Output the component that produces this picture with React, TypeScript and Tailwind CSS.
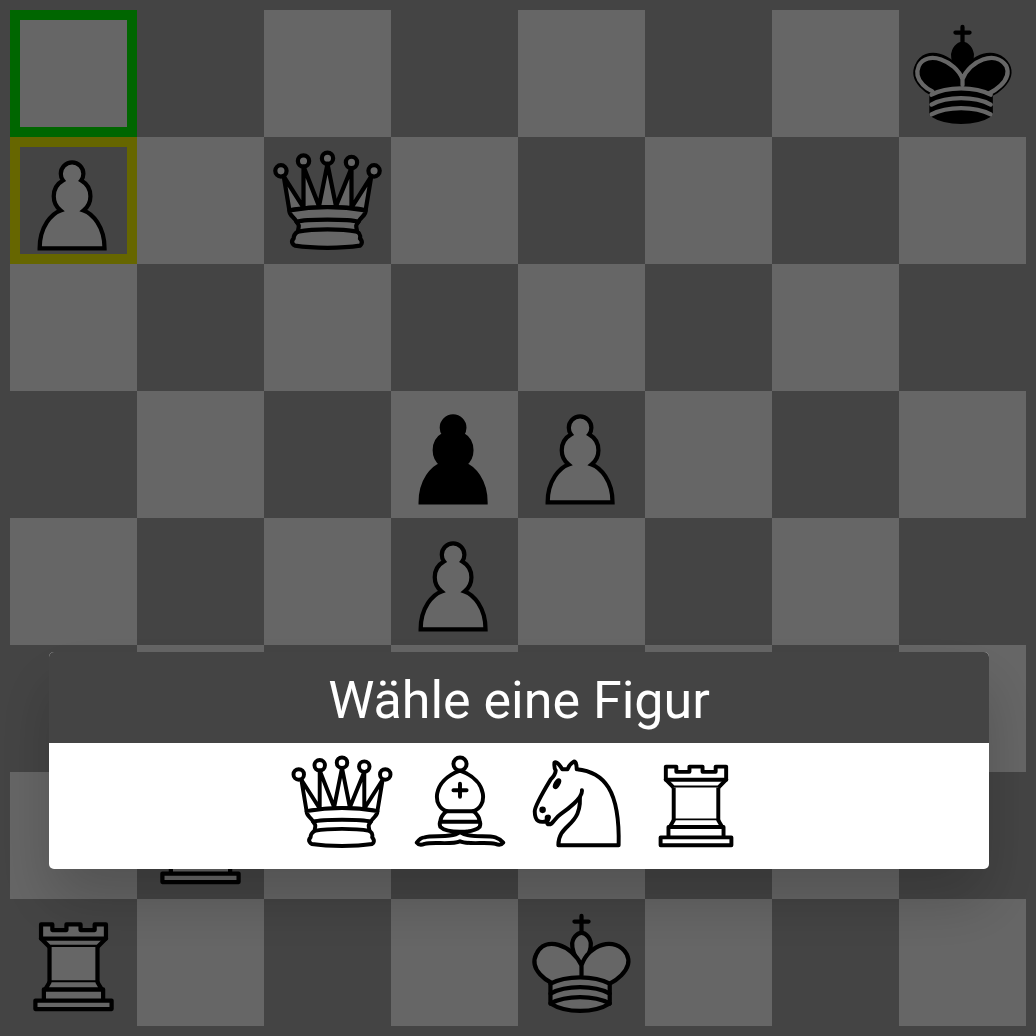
import { useState } from "react";
import type { ReactNode } from "react";

type Kind = "king" | "queen" | "rook" | "bishop" | "knight" | "pawn";
type Side = "white" | "black";
type Placed = { kind: Kind; side: Side };

function WhiteKing() {
  return (
    <>
      <path d="M22.5 11.63V6M20 8h5" />
      <path d="M22.5 25s4.5-7.5 3-10.500c0 0-1-2.500-3-2.500s-3 2.500-3 2.500c-1.500 3 3 10.500 3 10.500" strokeLinecap="butt" />
      <path d="M11.5 37c5.500 3.500 15.500 3.500 21 0v-7s9-4.500 6-10.500c-4-6.500-13.500-3.500-16 4V27v-3.500c-3.500-7.500-13-10.500-16-4-3 6 5 10 5 10V37z" />
      <path d="M11.5 30c5.500-3 15.500-3 21 0M11.5 33.500c5.500-3 15.500-3 21 0M11.5 37c5.500-3 15.500-3 21 0" fill="none" />
    </>
  );
}

function BlackKing() {
  return (
    <>
      <path d="M22.5 11.63V6M20 8h5" />
      <path d="M22.5 25s4.5-7.5 3-10.500c0 0-1-2.500-3-2.500s-3 2.500-3 2.500c-1.500 3 3 10.500 3 10.500" fill="black" />
      <path d="M11.5 37c5.500 3.500 15.500 3.500 21 0v-7s9-4.500 6-10.500c-4-6.500-13.500-3.500-16 4V27v-3.500c-3.500-7.500-13-10.500-16-4-3 6 5 10 5 10V37z" fill="black" />
      <g stroke="white" fill="none">
        <path d="M32 29.500s8.500-4 6.030-9.650C34.150 14 25 18 22.500 24.500l.01 2.100-.01-2.100C20 18 9.906 14 6.997 19.850c-2.497 5.650 4.853 9 4.853 9" />
        <path d="M11.5 30c5.500-3 15.500-3 21 0M11.5 33.500c5.500-3 15.500-3 21 0M11.5 37c5.500-3 15.500-3 21 0" />
      </g>
    </>
  );
}

function Queen() {
  return (
    <>
      <circle cx="6" cy="12" r="2" />
      <circle cx="14" cy="8.5" r="2" />
      <circle cx="22.5" cy="7.5" r="2" />
      <circle cx="31" cy="9" r="2" />
      <circle cx="39" cy="12" r="2" />
      <path d="M9 26c8.500-1.500 21-1.500 27 0l2-12-7 11V11l-5.500 13.500-3-15-3 15-5.500-14V25L7 14l2 12z" strokeLinecap="butt" />
      <path d="M9 26c0 2 1.500 2 2.500 4 1 1.500 1 1 .5 3.500-1.500 1-1.500 2.500-1.500 2.500-1.500 1.500.5 2.500.5 2.500 6.500 1 16.500 1 23 0 0 0 1.500-1 0-2.500 0 0 .5-1.500-1-2.500-.5-2.500-.5-2 .5-3.500 1-2 2.500-2 2.500-4-8.500-1.500-18.500-1.500-27 0z" strokeLinecap="butt" />
      <path d="M11.5 30c3.500-1 18.500-1 22 0M12 33.500c6-1 15-1 21 0" fill="none" />
    </>
  );
}

function Rook() {
  return (
    <>
      <path d="M9 39h27v-3H9v3zM12 36v-4h21v4H12zM11 14V9h4v2h5V9h5v2h5V9h4v5" strokeLinecap="butt" />
      <path d="M34 14l-3 3H14l-3-3" />
      <path d="M31 17v12.500H14V17" strokeLinecap="butt" strokeLinejoin="miter" />
      <path d="M31 29.500l1.500 2.500h-20l1.500-2.500" />
      <path d="M11 14h23" fill="none" strokeLinejoin="miter" />
    </>
  );
}

function Bishop() {
  return (
    <>
      <path d="M9 36c3.390-.970 10.110.430 13.500-2 3.390 2.430 10.110 1.030 13.500 2 0 0 1.650.540 3 2-.680.970-1.650.990-3 .5-3.390-.970-10.110.460-13.500-1-3.390 1.460-10.110.030-13.500 1-1.354.490-2.323.470-3-.5 1.354-1.940 3-2 3-2z" strokeLinecap="butt" />
      <path d="M15 32c2.500 2.500 12.500 2.500 15 0 .5-1.500 0-2 0-2 0-2.500-2.500-4-2.500-4 5.500-1.500 6-11.500-5-15.500-11 4-10.500 14-5 15.500 0 0-2.500 1.500-2.500 4 0 0-.5.500 0 2z" />
      <circle cx="22.5" cy="8" r="2.5" />
      <path d="M17.500 26h10M15 30h15M22.500 15.500v5M20 18h5" fill="none" />
    </>
  );
}

function Knight() {
  return (
    <>
      <path d="M22 10c10.500 1 16.500 8 16 29H15c0-9 10-6.500 8-21" />
      <path d="M24 18c.380 2.910-5.550 7.370-8 9-3 2-2.820 4.340-5 4-1.042-.940 1.410-3.040 0-3-1 0 .190 1.230-1 2-1 0-4.003 1-4-4 0-2 6-12 6-12s1.890-1.900 2-3.500c-.730-.994-.500-2-.500-3 1-1 3 2.500 3 2.500h2s.780-1.992 2.500-3c1 0 1 3 1 3" />
      <circle cx="9" cy="25.5" r="0.5" fill="black" />
      <ellipse cx="14.5" cy="15.5" rx="0.5" ry="1.5" transform="rotate(30 14.5 15.5)" fill="black" />
    </>
  );
}

function Pawn() {
  return (
    <path
      d="M22 9c-2.210 0-4 1.790-4 4 0 .890.290 1.710.780 2.380C16.830 16.500 15.500 18.590 15.500 21c0 2.030.940 3.840 2.410 5.030-3 1.060-7.410 5.550-7.410 13.470h23c0-7.920-4.410-12.410-7.410-13.470 1.470-1.190 2.410-3 2.410-5.030 0-2.410-1.330-4.500-3.280-5.620.490-.670.780-1.490.780-2.380 0-2.210-1.790-4-4-4z"
      strokeLinejoin="miter"
    />
  );
}

const shapes: Record<Kind, ReactNode> = {
  king: <WhiteKing />,
  queen: <Queen />,
  rook: <Rook />,
  bishop: <Bishop />,
  knight: <Knight />,
  pawn: <Pawn />,
};

function Piece({ kind, side }: Placed) {
  return (
    <svg
      viewBox="0 0 45 45"
      className="block size-full"
      fill={side === "white" ? "white" : "black"}
      stroke="black"
      strokeWidth="1.5"
      strokeLinecap="round"
      strokeLinejoin="round"
      aria-hidden="true"
    >
      {side === "black" && kind === "king" ? <BlackKing /> : shapes[kind]}
    </svg>
  );
}

const position: Record<string, Placed> = {
  h8: { kind: "king", side: "black" },
  a7: { kind: "pawn", side: "white" },
  c7: { kind: "queen", side: "white" },
  d5: { kind: "pawn", side: "black" },
  e5: { kind: "pawn", side: "white" },
  d4: { kind: "pawn", side: "white" },
  b2: { kind: "rook", side: "white" },
  a1: { kind: "rook", side: "white" },
  e1: { kind: "king", side: "white" },
};

const highlights: Record<string, string> = {
  a8: "border-10 border-[#00ff00]",
  a7: "border-10 border-[#ffff00]",
};

const squares = Array.from({ length: 64 }, (_, i) => {
  const col = i % 8;
  const row = Math.floor(i / 8);
  return { name: "abcdefgh"[col] + (8 - row), light: (col + row) % 2 === 0 };
});

const choices: { kind: Kind; label: string }[] = [
  { kind: "queen", label: "Dame" },
  { kind: "bishop", label: "Läufer" },
  { kind: "knight", label: "Springer" },
  { kind: "rook", label: "Turm" },
];

export default function App() {
  const [, setChoice] = useState<Kind | null>(null);

  return (
    <div className="min-h-screen bg-[#aaaaaa] p-2.5 font-[Roboto,sans-serif]">
      <main className="grid grid-cols-8">
        {squares.map(({ name, light }) => {
          const piece = position[name];
          return (
            <button
              key={name}
              type="button"
              aria-label={name}
              className={`relative aspect-square ${light ? "bg-white" : "bg-[#aaaaaa]"}`}
            >
              {highlights[name] && <span className={`absolute inset-0 ${highlights[name]}`} />}
              {piece && (
                <span className="absolute inset-0">
                  <Piece kind={piece.kind} side={piece.side} />
                </span>
              )}
            </button>
          );
        })}
      </main>

      <div className="fixed inset-0 flex items-end bg-black/60 pr-[47px] pb-[167px] pl-[49px]">
        <section
          role="dialog"
          aria-modal="true"
          aria-labelledby="promotion-title"
          className="w-full overflow-hidden rounded-[5px] bg-white shadow-[0_32px_60px_rgba(0,0,0,0.2)]"
        >
          <h1
            id="promotion-title"
            className="bg-[#444444] px-4 pt-[18px] pb-3 text-center text-[52px] leading-[61px] font-normal text-white"
          >
            Wähle eine Figur
          </h1>
          <div className="flex justify-center pb-2">
            {choices.map(({ kind, label }) => (
              <button
                key={kind}
                type="button"
                aria-label={label}
                onClick={() => setChoice(kind)}
                className="size-[118px] cursor-pointer"
              >
                <Piece kind={kind} side="white" />
              </button>
            ))}
          </div>
        </section>
      </div>
    </div>
  );
}
